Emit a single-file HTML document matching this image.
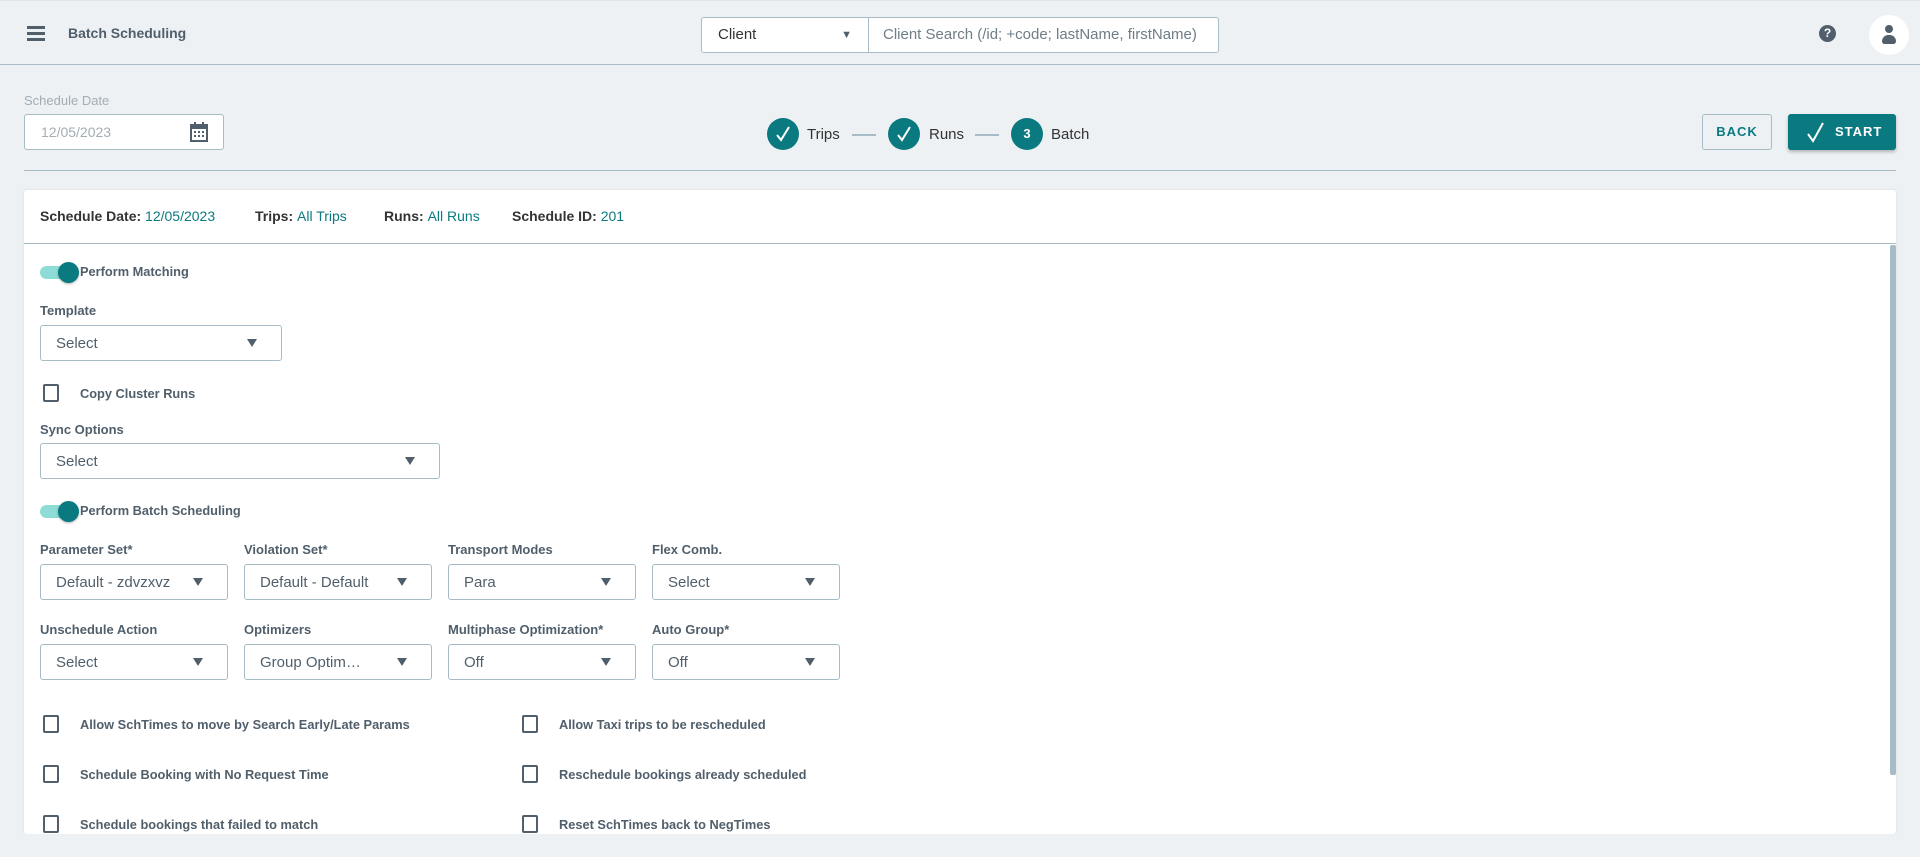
<!DOCTYPE html>
<html><head><meta charset="utf-8"><style>
*{box-sizing:border-box;margin:0;padding:0}
body{width:1920px;height:857px;background:#edf1f4;font-family:"Liberation Sans",sans-serif;color:#505f6b;position:relative;overflow:hidden}
.abs{position:absolute}
.hdr{left:0;top:0;width:1920px;height:65px;border-top:1px solid #dfe5ea;border-bottom:1px solid #a7bcc6}
.lbl{font-size:13px;font-weight:bold;color:#505f6b;position:absolute}
.sel{position:absolute;height:36px;border:1px solid #a7bcc6;border-radius:3px;background:#fff;font-size:15px;color:#505f6b;padding:0 0 0 15px;line-height:35px}
.sel:after{content:"";position:absolute;right:24px;top:13px;border-left:5px solid transparent;border-right:5px solid transparent;border-top:8px solid #505f6b}
.cb{position:absolute;width:16px;height:18px;border:2px solid #505f6b;border-radius:2px}
.ct{position:absolute;font-size:12.8px;font-weight:bold;color:#505f6b}
.tg{position:absolute;width:30px;height:13px;background:#8ddcd5;border-radius:7px}
.tg:after{content:"";position:absolute;right:-9px;top:-4px;width:21px;height:21px;border-radius:50%;background:#0a7a80;box-shadow:0 1px 2px rgba(0,0,0,.3)}
.circ{position:absolute;width:32px;height:32px;border-radius:50%;background:#0a7a80;color:#fff;text-align:center;line-height:32px;font-size:13px;font-weight:bold}
.st{position:absolute;font-size:15px;color:#333;top:126px}
.ln{position:absolute;top:134px;height:2px;width:24px;background:#a7bcc6}
.hv{font-size:14px;font-weight:bold;color:#333;position:absolute;top:208px}
.hv span{color:#0a7a80;font-weight:normal}
</style></head><body>
<div class="abs hdr"></div>
<div class="abs" style="left:27px;top:26px;width:18px;height:3px;background:#505f6b"></div>
<div class="abs" style="left:27px;top:32px;width:18px;height:3px;background:#505f6b"></div>
<div class="abs" style="left:27px;top:38px;width:18px;height:3px;background:#505f6b"></div>
<div class="abs" style="left:68px;top:25px;font-size:14px;font-weight:bold;color:#505f6b">Batch Scheduling</div>
<div class="abs" style="left:701px;top:17px;width:168px;height:36px;background:#fff;border:1px solid #a7bcc6;border-radius:3px 0 0 3px;font-size:15px;color:#333;padding-left:16px;line-height:34px">Client<span style="position:absolute;right:16px;top:0;font-size:11px;color:#505f6b">▼</span></div>
<div class="abs" style="left:868px;top:17px;width:351px;height:36px;background:#fff;border:1px solid #a7bcc6;border-radius:0 3px 3px 0;font-size:15px;color:#6f7d87;padding-left:14px;line-height:34px">Client Search (/id; +code; lastName, firstName)</div>
<div class="abs" style="left:1819px;top:25px;width:17px;height:17px;border-radius:50%;background:#505f6b;color:#fff;font-size:12px;font-weight:bold;text-align:center;line-height:17px">?</div>
<div class="abs" style="left:1869px;top:15px;width:40px;height:40px;border-radius:50%;background:#fff"></div>
<div class="abs" style="left:1885px;top:25px;width:8px;height:8px;border-radius:50%;background:#505f6b"></div>
<div class="abs" style="left:1882px;top:35px;width:14px;height:9px;border-radius:7px 7px 3px 3px;background:#505f6b"></div>

<div class="abs" style="left:24px;top:93px;font-size:13px;color:#a2adb5">Schedule Date</div>
<div class="abs" style="left:24px;top:114px;width:200px;height:36px;border:1px solid #a7bcc6;border-radius:3px;background:#fff;font-size:14px;color:#a2adb5;padding-left:16px;line-height:34px">12/05/2023</div>
<svg class="abs" style="left:190px;top:122px" width="18" height="20" viewBox="0 0 18 20"><rect x="1" y="3" width="16" height="16" fill="none" stroke="#505f6b" stroke-width="2"/><rect x="1" y="3" width="16" height="4" fill="#505f6b"/><rect x="4" y="0" width="2" height="5" fill="#505f6b"/><rect x="12" y="0" width="2" height="5" fill="#505f6b"/><g fill="#505f6b"><rect x="4" y="9" width="2" height="2"/><rect x="8" y="9" width="2" height="2"/><rect x="12" y="9" width="2" height="2"/><rect x="4" y="13" width="2" height="2"/><rect x="8" y="13" width="2" height="2"/><rect x="12" y="13" width="2" height="2"/></g></svg>

<div class="circ" style="left:767px;top:118px"><svg width="32" height="32"><path d="M10 17 L14 22 L22 9" fill="none" stroke="#fff" stroke-width="2"/></svg></div>
<div class="st" style="left:807px">Trips</div>
<div class="ln" style="left:852px"></div>
<div class="circ" style="left:888px;top:118px"><svg width="32" height="32"><path d="M10 17 L14 22 L22 9" fill="none" stroke="#fff" stroke-width="2"/></svg></div>
<div class="st" style="left:929px">Runs</div>
<div class="ln" style="left:975px"></div>
<div class="circ" style="left:1011px;top:118px">3</div>
<div class="st" style="left:1051px">Batch</div>

<div class="abs" style="left:1702px;top:114px;width:70px;height:36px;border:1px solid #a7bcc6;border-radius:3px;color:#0a7a80;font-size:13px;font-weight:bold;letter-spacing:1px;text-align:center;line-height:34px">BACK</div>
<div class="abs" style="left:1788px;top:114px;width:108px;height:36px;background:#0a7a80;border-radius:3px;color:#fff;font-size:13px;font-weight:bold;letter-spacing:1px;line-height:36px;padding-left:47px;box-shadow:0 2px 3px rgba(0,0,0,.25)">START</div>
<svg class="abs" style="left:1806px;top:121px" width="20" height="22"><path d="M2 13 L7 20 L17 2" fill="none" stroke="#fff" stroke-width="2"/></svg>

<div class="abs" style="left:24px;top:170px;width:1872px;height:1px;background:#a7bcc6"></div>

<div class="abs" style="left:24px;top:190px;width:1872px;height:644px;background:#fff;border-radius:3px;box-shadow:0 0 2px rgba(0,0,0,.1)"></div>
<div class="hv" style="left:40px">Schedule Date: <span>12/05/2023</span></div>
<div class="hv" style="left:255px">Trips: <span>All Trips</span></div>
<div class="hv" style="left:384px">Runs: <span>All Runs</span></div>
<div class="hv" style="left:512px">Schedule ID: <span>201</span></div>
<div class="abs" style="left:24px;top:243px;width:1872px;height:1px;background:#a7bcc6"></div>
<div class="abs" style="left:1890px;top:245px;width:6px;height:530px;background:#a7bcc6;border-radius:2px"></div>

<div class="tg" style="left:40px;top:266px"></div><div class="ct" style="left:80px;top:264px">Perform Matching</div>
<div class="lbl" style="left:40px;top:303px">Template</div>
<div class="sel" style="left:40px;top:325px;width:242px">Select</div>
<div class="cb" style="left:43px;top:384px"></div><div class="ct" style="left:80px;top:386px">Copy Cluster Runs</div>
<div class="lbl" style="left:40px;top:422px">Sync Options</div>
<div class="sel" style="left:40px;top:443px;width:400px">Select</div>
<div class="tg" style="left:40px;top:505px"></div><div class="ct" style="left:80px;top:503px">Perform Batch Scheduling</div>

<div class="lbl" style="left:40px;top:542px">Parameter Set*</div>
<div class="lbl" style="left:244px;top:542px">Violation Set*</div>
<div class="lbl" style="left:448px;top:542px">Transport Modes</div>
<div class="lbl" style="left:652px;top:542px">Flex Comb.</div>
<div class="sel" style="left:40px;top:564px;width:188px">Default - zdvzxvz</div>
<div class="sel" style="left:244px;top:564px;width:188px">Default - Default</div>
<div class="sel" style="left:448px;top:564px;width:188px">Para</div>
<div class="sel" style="left:652px;top:564px;width:188px">Select</div>

<div class="lbl" style="left:40px;top:622px">Unschedule Action</div>
<div class="lbl" style="left:244px;top:622px">Optimizers</div>
<div class="lbl" style="left:448px;top:622px">Multiphase Optimization*</div>
<div class="lbl" style="left:652px;top:622px">Auto Group*</div>
<div class="sel" style="left:40px;top:644px;width:188px">Select</div>
<div class="sel" style="left:244px;top:644px;width:188px">Group Optim…</div>
<div class="sel" style="left:448px;top:644px;width:188px">Off</div>
<div class="sel" style="left:652px;top:644px;width:188px">Off</div>

<div class="cb" style="left:43px;top:715px"></div><div class="ct" style="left:80px;top:717px">Allow SchTimes to move by Search Early/Late Params</div>
<div class="cb" style="left:522px;top:715px"></div><div class="ct" style="left:559px;top:717px">Allow Taxi trips to be rescheduled</div>
<div class="cb" style="left:43px;top:765px"></div><div class="ct" style="left:80px;top:767px">Schedule Booking with No Request Time</div>
<div class="cb" style="left:522px;top:765px"></div><div class="ct" style="left:559px;top:767px">Reschedule bookings already scheduled</div>
<div class="cb" style="left:43px;top:815px"></div><div class="ct" style="left:80px;top:817px">Schedule bookings that failed to match</div>
<div class="cb" style="left:522px;top:815px"></div><div class="ct" style="left:559px;top:817px">Reset SchTimes back to NegTimes</div>
<div class="abs" style="left:0;top:834px;width:1920px;height:23px;background:#edf1f4"></div>
</body></html>
